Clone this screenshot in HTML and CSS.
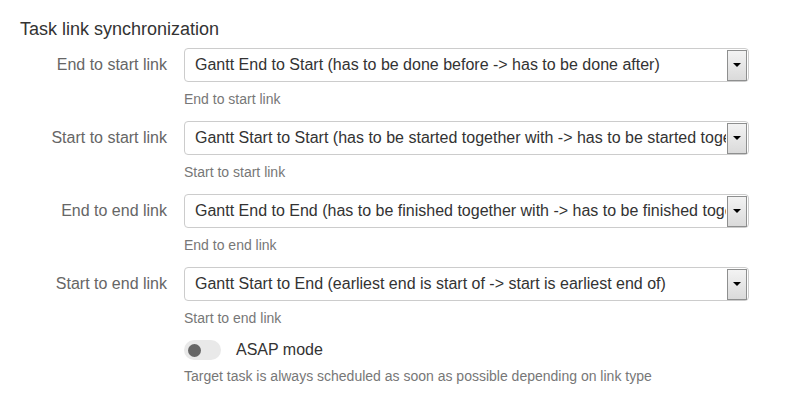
FILE: index.html
```html
<!DOCTYPE html>
<html>
<head>
<meta charset="utf-8">
<link rel="stylesheet" href="styles.css">
</head>
<body>
<div class="page">
  <h3 class="title">Task link synchronization</h3>
  <div class="form">
    <div class="row">
      <label class="label">End to start link</label>
      <div class="field">
        <div class="select">
          <span class="value">Gantt End to Start (has to be done before -&gt; has to be done after)</span>
          <span class="btn"><span class="tri"></span></span>
        </div>
        <div class="help">End to start link</div>
      </div>
    </div>
    <div class="row">
      <label class="label">Start to start link</label>
      <div class="field">
        <div class="select">
          <span class="value">Gantt Start to Start (has to be started together with -&gt; has to be started together with)</span>
          <span class="btn"><span class="tri"></span></span>
        </div>
        <div class="help">Start to start link</div>
      </div>
    </div>
    <div class="row">
      <label class="label">End to end link</label>
      <div class="field">
        <div class="select">
          <span class="value">Gantt End to End (has to be finished together with -&gt; has to be finished together with)</span>
          <span class="btn"><span class="tri"></span></span>
        </div>
        <div class="help">End to end link</div>
      </div>
    </div>
    <div class="row">
      <label class="label">Start to end link</label>
      <div class="field">
        <div class="select">
          <span class="value">Gantt Start to End (earliest end is start of -&gt; start is earliest end of)</span>
          <span class="btn"><span class="tri"></span></span>
        </div>
        <div class="help">Start to end link</div>
      </div>
    </div>
    <div class="row">
      <span class="label"></span>
      <div class="field">
        <div class="toggle-line">
          <span class="toggle"><span class="knob"></span></span>
          <span class="toggle-label">ASAP mode</span>
        </div>
        <div class="help help-last">Target task is always scheduled as soon as possible depending on link type</div>
      </div>
    </div>
  </div>
</div>
</body>
</html>
```

FILE: styles.css
```css
html, body {
  margin: 0;
  padding: 0;
  background: #ffffff;
}
body {
  font-family: "Liberation Sans", Arial, sans-serif;
  color: #333333;
}
.page {
  padding: 19px 0 0 20px;
}
.title {
  margin: 0;
  font-size: 18px;
  font-weight: normal;
  line-height: 20px;
  color: #333333;
}
.form {
  margin-top: 9px;
  display: flex;
  flex-direction: column;
}
.row {
  display: grid;
  grid-template-columns: 147px 565px;
  column-gap: 17px;
  margin-bottom: 12px;
}
.label {
  text-align: right;
  font-size: 16px;
  color: #666666;
  line-height: 34px;
}
.select {
  display: flex;
  height: 34px;
  box-sizing: border-box;
  border: 1px solid #cccccc;
  border-radius: 4px;
  align-items: center;
  padding: 0 1px 0 10px;
  background: #fff;
}
.value {
  flex: 1;
  overflow: hidden;
  white-space: nowrap;
  font-size: 16px;
  color: #333;
}
.btn {
  width: 20px;
  height: 31px;
  box-sizing: border-box;
  border: 1px solid #8e8f8f;
  background: linear-gradient(#f3f3f3, #dadada);
  display: flex;
  align-items: center;
  justify-content: center;
  margin-left: 1px;
}
.tri {
  width: 0;
  height: 0;
  border-left: 4px solid transparent;
  border-right: 4px solid transparent;
  border-top: 4px solid #000;
}
.help {
  font-size: 14px;
  color: #777777;
  line-height: 20px;
  margin-top: 7px;
}
.help-last {
  margin-top: 5px;
}
.toggle-line {
  display: flex;
  align-items: center;
  height: 22px;
  margin-top: -1px;
}
.toggle {
  width: 37px;
  height: 20px;
  border-radius: 10px;
  background: #e9e9e9;
  display: flex;
  align-items: center;
  padding-left: 4px;
  box-sizing: border-box;
}
.knob {
  width: 13px;
  height: 13px;
  border-radius: 50%;
  background: #666666;
}
.toggle-label {
  margin-left: 15px;
  font-size: 16px;
  color: #333;
}
```
